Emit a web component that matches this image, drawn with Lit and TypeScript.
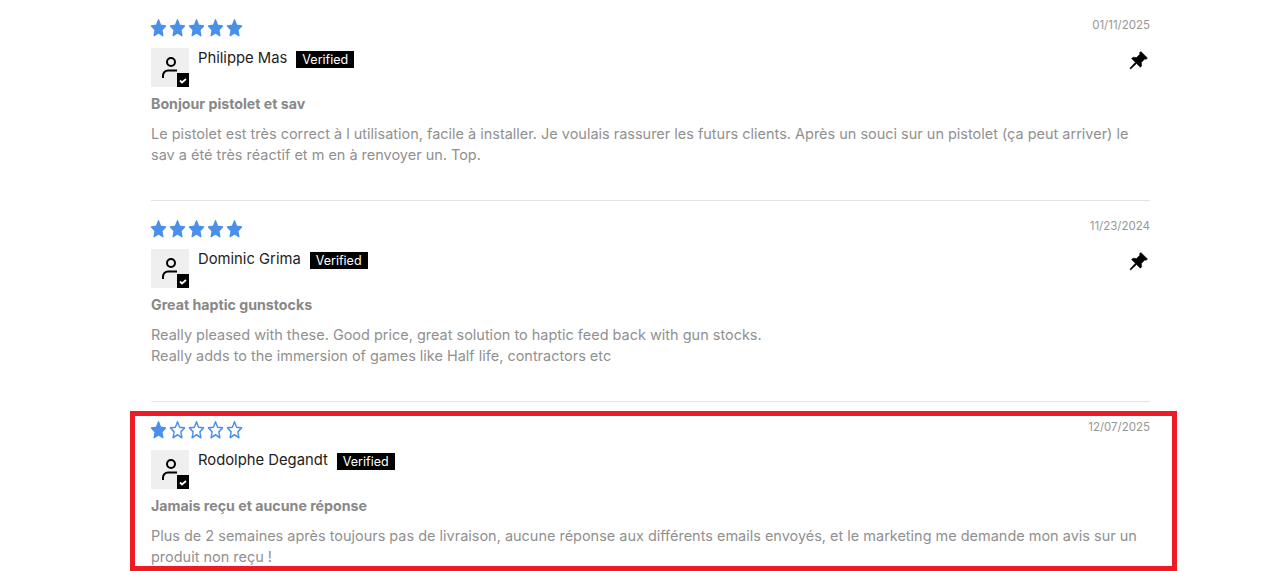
import { LitElement, html, css, svg, nothing } from 'lit';
import { customElement } from 'lit/decorators.js';

const STAR = 'M12 2.2l2.95 6.5 7.05.8-5.25 4.75 1.45 7-6.2-3.55-6.2 3.55 1.45-7L2 9.5l7.05-.8z';

const reviews = [
  {
    rating: 5,
    date: '01/11/2025',
    name: 'Philippe Mas',
    title: 'Bonjour pistolet et sav',
    lines: ['Le pistolet est très correct à l utilisation, facile à installer. Je voulais rassurer les futurs clients. Après un souci sur un pistolet (ça peut arriver) le', 'sav a été très réactif et m en à renvoyer un. Top.'],
    pinned: true,
  },
  {
    rating: 5,
    date: '11/23/2024',
    name: 'Dominic Grima',
    title: 'Great haptic gunstocks',
    lines: ['Really pleased with these. Good price, great solution to haptic feed back with gun stocks.', 'Really adds to the immersion of games like Half life, contractors etc'],
    pinned: true,
  },
  {
    rating: 1,
    date: '12/07/2025',
    name: 'Rodolphe Degandt',
    title: 'Jamais reçu et aucune réponse',
    lines: ['Plus de 2 semaines après toujours pas de livraison, aucune réponse aux différents emails envoyés, et le marketing me demande mon avis sur un', 'produit non reçu !'],
    pinned: false,
  },
];

@customElement('app-root')
export class AppRoot extends LitElement {
  static styles = css`
    :host {
      display: block;
      height: 571px;
      overflow: hidden;
      background: #fff;
      font-family: Inter, 'Liberation Sans', sans-serif;
    }
    .list {
      position: relative;
      width: 999px;
      margin-left: 151px;
    }
    .review {
      box-sizing: border-box;
      height: 201px;
      border-bottom: 1px solid #e3e3e3;
      padding-top: 18px;
    }
    .review:last-of-type {
      border-bottom: 0;
    }
    .top {
      display: flex;
      justify-content: space-between;
      height: 20px;
    }
    .stars {
      display: flex;
      gap: 2px;
      margin-left: -1px;
    }
    .stars svg {
      width: 17px;
      height: 20px;
      overflow: visible;
    }
    .date {
      font-size: 11.5px;
      line-height: 14px;
      color: #979797;
    }
    .author {
      display: flex;
      margin-top: 10px;
      height: 39px;
    }
    .avatar {
      position: relative;
      width: 38px;
      height: 39px;
      background: #efefef;
      flex: none;
    }
    .avatar .person {
      position: absolute;
      left: 10px;
      top: 8px;
      width: 20px;
      height: 24px;
    }
    .avatar .check {
      position: absolute;
      left: 26px;
      top: 25px;
      width: 12px;
      height: 14px;
      background: #000;
    }
    .avatar .check svg {
      display: block;
    }
    .name {
      margin-left: 9px;
      font-size: 14.8px;
      line-height: 20px;
      color: #222;
    }
    .badge {
      margin-left: 9px;
      margin-top: 3px;
      height: 17px;
      padding: 0 6px;
      background: #000;
      color: #fff;
      font-size: 12.5px;
      line-height: 17px;
    }
    .pin {
      width: 19px;
      height: 19px;
      margin-left: auto;
      margin-top: 3px;
      margin-right: 2px;
    }
    .title {
      margin: 8px 0 0;
      font-size: 14.2px;
      line-height: 18px;
      font-weight: 700;
      color: #888;
    }
    .body {
      margin: 10px 0 0;
      font-size: 14.48px;
      line-height: 21px;
      color: #909090;
    }
    .highlight {
      position: absolute;
      left: -21px;
      top: 411px;
      width: 1047px;
      height: 160px;
      box-sizing: border-box;
      border: 5px solid #ed1c24;
      pointer-events: none;
    }
  `;

  private renderStars(rating: number) {
    return html`<div class="stars">
      ${[1, 2, 3, 4, 5].map(
        (i) => html`<svg viewBox="0 0 24 24" preserveAspectRatio="none">
          ${i <= rating
            ? svg`<path d=${STAR} fill="#4a90e8" stroke="#4a90e8" stroke-width="1.8" stroke-linejoin="round"></path>`
            : svg`<path d=${STAR} fill="none" stroke="#4a90e8" stroke-width="2" stroke-linejoin="round"></path>`}
        </svg>`,
      )}
    </div>`;
  }

  render() {
    return html`<div class="list">
      ${reviews.map(
        (r) => html`<div class="review">
          <div class="top">
            ${this.renderStars(r.rating)}
            <span class="date">${r.date}</span>
          </div>
          <div class="author">
            <div class="avatar">
              <svg class="person" viewBox="0 0 20 24" fill="none" stroke="#000" stroke-width="2">
                <circle cx="10" cy="6" r="4"></circle>
                <path d="M2 22v-2.5a5 5 0 0 1 5-5h9"></path>
              </svg>
              <div class="check">
                <svg viewBox="0 0 12 14" width="12" height="14" fill="none" stroke="#fff" stroke-width="1.8">
                  <path d="M3 7.5l2 2 4-3.5"></path>
                </svg>
              </div>
            </div>
            <span class="name">${r.name}</span>
            <span class="badge">Verified</span>
            ${r.pinned
              ? html`<svg class="pin" viewBox="1 1 18 18">
                  <path d="M12.2 1.5l6.3 6.2-1.3 1.2-1.3-.3-3.2 3.2.3 3.3-1.3 1.3-3.5-3.5-5.6 5.2-.8-.7 5.2-5.7-3.5-3.5 1.3-1.3 3.3.3 3.2-3.2-.3-1.3z" fill="#000" stroke="#000" stroke-width=".5" stroke-linejoin="round"></path>
                </svg>`
              : nothing}
          </div>
          <p class="title">${r.title}</p>
          <p class="body">${r.lines[0]}<br />${r.lines[1]}</p>
        </div>`,
      )}
      <div class="highlight"></div>
    </div>`;
  }
}
